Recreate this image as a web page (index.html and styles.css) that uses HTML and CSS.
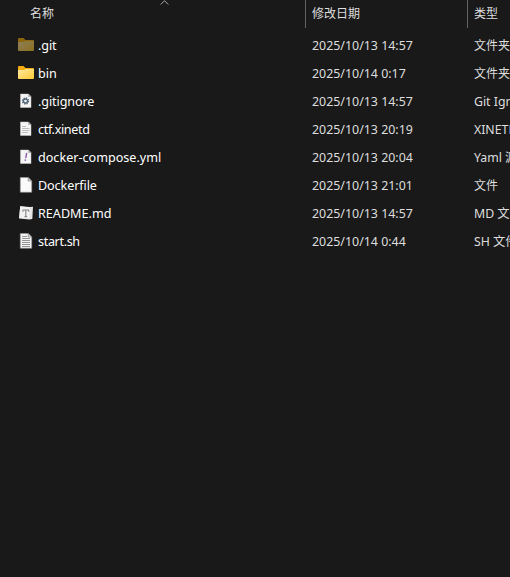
FILE: index.html
```
<!DOCTYPE html>
<html lang="zh-CN">
<head>
<meta charset="utf-8">
<title>文件列表</title>
<link rel="stylesheet" href="styles.css">
</head>
<body>
<svg width="0" height="0" class="defs" aria-hidden="true">
  <defs>
    <linearGradient id="gold" x1="0" y1="0" x2="1" y2="1"><stop offset="0" stop-color="#ffe9a0"/><stop offset="1" stop-color="#ffc934"/></linearGradient>
    <linearGradient id="dim" x1="0" y1="0" x2="1" y2="1"><stop offset="0" stop-color="#8c805a"/><stop offset="1" stop-color="#8c701f"/></linearGradient>
    <symbol id="page" viewBox="0 0 16 16"><path d="M2.5 1h8L13 3.5V14.5H2.5z" fill="#f5f5f5" stroke="#c9c9c9" stroke-width=".5"/><path d="M10.3 1V3.7H13z" fill="#999"/></symbol>
  </defs>
</svg>
<div class="head">
  <div class="col name">名称<svg class="sort" viewBox="0 0 9 5"><path d="M.7 4.5 4.5.7l3.8 3.8" fill="none" stroke="#aaa"/></svg></div>
  <div class="col date">修改日期</div>
  <div class="col type">类型</div>
</div>
<div class="list">
  <div class="row">
    <div class="file"><svg class="icon" viewBox="0 0 16 16"><path d="M0 2q0-1 1-1h4.5l2 2H15q1 0 1 1v4H0z" fill="#8c650c"/><path d="M0 5h6l1.5-1H16v9q0 1-1 1H1q-1 0-1-1z" fill="url(#dim)"/></svg><span class="snug">.git</span></div>
    <div class="date">2025/10/13 14:57</div><div class="type">文件夹</div>
  </div>
  <div class="row">
    <div class="file"><svg class="icon" viewBox="0 0 16 16"><path d="M0 2q0-1 1-1h4.5l2 2H15q1 0 1 1v4H0z" fill="#f3ab10"/><path d="M0 5h6l1.5-1H16v9q0 1-1 1H1q-1 0-1-1z" fill="url(#gold)"/></svg><span>bin</span></div>
    <div class="date">2025/10/14 0:17</div><div class="type">文件夹</div>
  </div>
  <div class="row">
    <div class="file"><svg class="icon" viewBox="0 0 16 16"><use href="#page"/><circle cx="7.5" cy="8" r="3" fill="none" stroke="#506477" stroke-width="1.4" stroke-dasharray="1.3 1.056"/><circle cx="7.5" cy="8" r="2" fill="none" stroke="#506477" stroke-width="1.3"/></svg><span class="snug">.gitignore</span></div>
    <div class="date">2025/10/13 14:57</div><div class="type latin">Git Ignore</div>
  </div>
  <div class="row">
    <div class="file"><svg class="icon" viewBox="0 0 16 16"><use href="#page"/><path d="M4 5.5h4M4 7.5h7.5M4 9.5h7.5M4 11.5h6" stroke="#b0b0b0" stroke-width=".8"/></svg><span class="tight">ctf.xinetd</span></div>
    <div class="date">2025/10/13 20:19</div><div class="type latin">XINETD 文件</div>
  </div>
  <div class="row">
    <div class="file"><svg class="icon" viewBox="0 0 16 16"><use href="#page"/><path d="M8.7 3.8 7.7 9.2M7.4 10.4 7.2 11.8" stroke="#8a5aac" stroke-width="1.4"/></svg><span>docker-compose.yml</span></div>
    <div class="date">2025/10/13 20:04</div><div class="type latin">Yaml 源文件</div>
  </div>
  <div class="row">
    <div class="file"><svg class="icon" viewBox="0 0 16 16"><path d="M2.3.5h8L13.7 4v11.2H2.3z" fill="#fafafa" stroke="#999" stroke-width=".6"/><path d="M10.2.5V4h3.5z" fill="#d0d0d0" stroke="#777" stroke-width=".6"/></svg><span class="snug">Dockerfile</span></div>
    <div class="date">2025/10/13 21:01</div><div class="type">文件</div>
  </div>
  <div class="row">
    <div class="file"><svg class="icon" viewBox="0 0 16 16"><path d="M2.2 1.2 12 2l3-.3-.7 12.2-3 .6-10.3-1z" fill="#e4e4e4"/><path d="m2.2 1.2 9.8 1.2-.8 11.4-9.9-1z" fill="#f2f2f2"/><path d="M4.7 5h6.2M7.8 5v6.6M6.5 11.6h2.6M4.9 5v1.7M10.7 5v1.7" stroke="#858585" stroke-width="1.1" fill="none"/></svg><span>README.md</span></div>
    <div class="date">2025/10/13 14:57</div><div class="type latin">MD 文件</div>
  </div>
  <div class="row">
    <div class="file"><svg class="icon" viewBox="0 0 16 16"><path d="M2.3.5h8L13.7 4v11.2H2.3z" fill="#f5f5f5" stroke="#999" stroke-width=".6"/><path d="M10.2.5V4h3.5z" fill="#ddd" stroke="#777" stroke-width=".6"/><path d="M4 3.5h5M4 5.5h8M4 7.5h8M4 9.5h8M4 11.5h8M4 13.5h8" stroke="#8a8a8a" stroke-width=".9"/></svg><span class="tight">start.sh</span></div>
    <div class="date">2025/10/14 0:44</div><div class="type latin">SH 文件</div>
  </div>
</div>
</body>
</html>
```
FILE: styles.css
```
* { box-sizing: border-box; }
body {
  margin: 0;
  height: 577px;
  overflow: hidden;
  background: #191919;
  color: #dedede;
  font: 12px/30px "Noto Sans", "Noto Sans CJK SC", sans-serif;
  white-space: nowrap;
}
.defs { position: absolute; }
.head, .row {
  display: grid;
  grid-template-columns: 306px 162px 42px;
}
.head { height: 27px; line-height: 28px; }
.col { border-right: 1px solid #636363; }
.col.type { border: 0; }
.name { position: relative; padding-left: 30px; }
.sort { position: absolute; left: 160px; top: 0; width: 9px; height: 5px; }
.date, .type { padding-left: 6px; overflow: hidden; }
.list { padding-top: 4px; }
.row { height: 28px; }
.row .date { font-size: 12.4px; }
.row .latin { font-size: 12.3px; }
.file {
  display: flex;
  align-items: flex-start;
  gap: 4px;
  padding-left: 18px;
  color: #fff;
  font-size: 12.6px;
}
.snug { letter-spacing: -.1px; }
.tight { letter-spacing: -.35px; }
.icon { width: 16px; height: 16px; margin-top: 6px; flex: none; }
```
